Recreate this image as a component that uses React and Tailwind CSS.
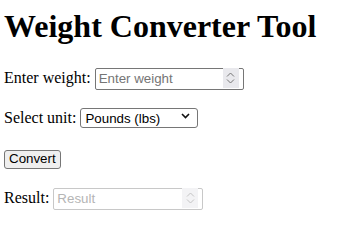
import React from "react";

function Spinner({ disabled }) {
  const c = disabled ? "#c4c4c4" : "#757575";
  return (
    <span
      className={`pointer-events-none absolute right-[5px] top-[2px] bottom-[2px] w-[16px] flex items-center justify-center ${
        disabled ? "bg-[#f3f3f5]" : "bg-[#e9e9ed]"
      }`}
    >
      <svg width="9" height="14" viewBox="0 0 9 14" fill="none">
        <path d="M1 5.5 L4.5 2 L8 5.5" stroke={c} strokeWidth="1" />
        <path d="M1 8.5 L4.5 12 L8 8.5" stroke={c} strokeWidth="1" />
      </svg>
    </span>
  );
}

export default function App() {
  return (
    <div className="bg-white text-black px-1 pt-2 pb-2 font-['Liberation_Serif',serif] text-[16px]">
      <h1 className="text-[32px] font-bold leading-[37px] mt-0 mb-[21.44px]">
        Weight Converter Tool
      </h1>
      <p className="my-4">
        <label htmlFor="w">Enter weight:</label>{" "}
        <span className="relative inline-block align-baseline">
          <input
            id="w"
            type="text"
            placeholder="Enter weight"
            className="w-[149px] h-[22px] border border-[#767676] rounded-[2px] px-[3px] font-['Liberation_Sans',Arial,sans-serif] text-[13.33px] placeholder:text-[#757575] outline-none"
          />
          <Spinner />
        </span>
      </p>
      <p className="my-4">
        <label htmlFor="u">Select unit:</label>{" "}
        <span className="relative inline-block align-baseline">
          <select
            id="u"
            className="appearance-none w-[118px] h-[20px] border border-[#767676] rounded-[3px] pl-[4px] bg-white font-['Liberation_Sans',Arial,sans-serif] text-[13.33px] text-black outline-none"
            defaultValue="lbs"
          >
            <option value="lbs">Pounds (lbs)</option>
            <option value="kg">Kilograms (kg)</option>
          </select>
          <svg
            className="pointer-events-none absolute right-[8px] top-[7px]"
            width="9"
            height="6"
            viewBox="0 0 9 6"
            fill="none"
          >
            <path d="M1 1 L4.5 4.5 L8 1" stroke="#111" strokeWidth="1.6" />
          </svg>
        </span>
      </p>
      <p className="my-4">
        <button
          type="button"
          className="h-[19px] px-[4px] border border-[#767676] rounded-[3px] bg-[#efefef] font-['Liberation_Sans',Arial,sans-serif] text-[13.33px] leading-none text-black"
        >
          Convert
        </button>
      </p>
      <p className="my-4">
        <label htmlFor="r">Result:</label>{" "}
        <span className="relative inline-block align-baseline">
          <input
            id="r"
            type="text"
            placeholder="Result"
            disabled
            className="w-[150px] h-[22px] border border-[#c8c8c8] rounded-[2px] px-[3px] bg-white font-['Liberation_Sans',Arial,sans-serif] text-[13.33px] placeholder:text-[#b5b5b5] outline-none"
          />
          <Spinner disabled />
        </span>
      </p>
    </div>
  );
}
